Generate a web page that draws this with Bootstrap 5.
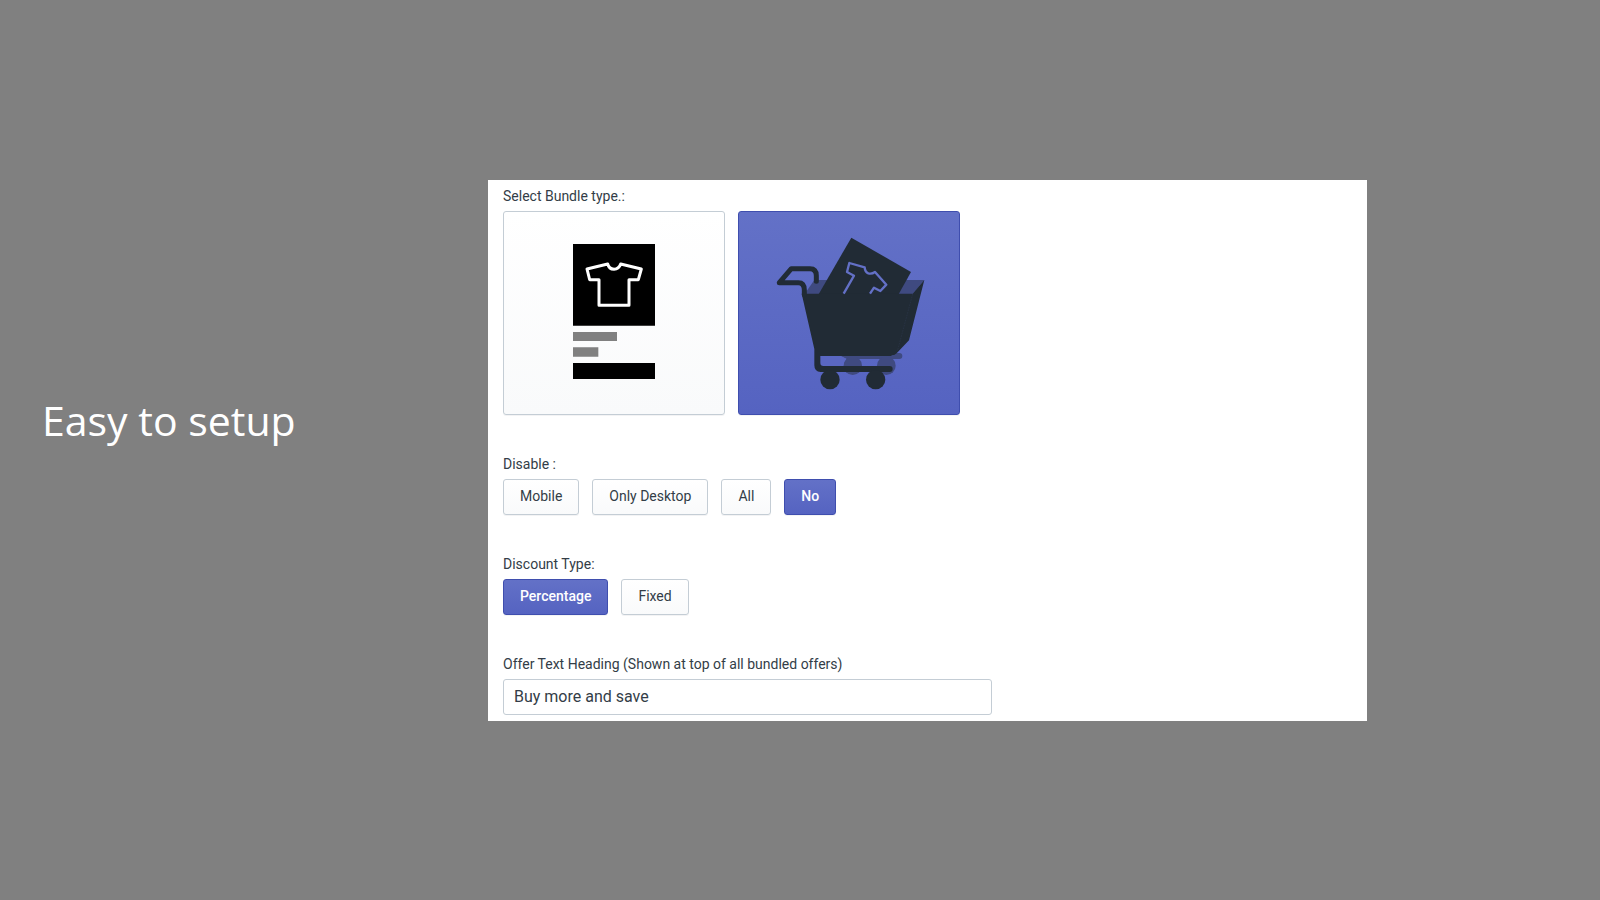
<!DOCTYPE html>
<html lang="en">
<head>
<meta charset="utf-8">
<meta name="viewport" content="width=device-width, initial-scale=1">
<title>Easy to setup</title>
<link href="https://cdn.jsdelivr.net/npm/bootstrap@5.3.0/dist/css/bootstrap.min.css" rel="stylesheet">
<style>
  body { background: #808080; color: #333d47; font-family: Roboto, "Liberation Sans", sans-serif; font-size: 14px; line-height: 20px; }
  .slide { display: grid; grid-template-columns: 446fr 879fr 233fr; padding-left: 42px; }
  .slide-title { color: #fff; font-family: "Open Sans", "Noto Sans", sans-serif; font-size: 41px; line-height: 56px; font-weight: 400; margin: 0 0 60px; }
  .setup-panel { background: #fff; padding: 6px 15px; display: grid; row-gap: 39px; }
  .field-label { display: block; margin-bottom: 5px; }
  .options { display: flex; flex-wrap: wrap; gap: 13px; }
  .choice { --bs-btn-color: #333d47; --bs-btn-border-color: #c4cdd5; --bs-btn-hover-color: #333d47; --bs-btn-hover-border-color: #c4cdd5;
    --bs-btn-font-size: 14px; --bs-btn-border-radius: 3px; padding: 5px 16px 7px;
    line-height: 22px; background: linear-gradient(#fff, #f9fafb); box-shadow: 0 1px 0 rgba(22, 29, 37, .05); }
  .choice.active { color: #fff; font-weight: 500; background: linear-gradient(#6371c7, #5563c1); border-color: #3f4eae; }
  .choice-picture { width: 222px; padding: 0; overflow: hidden; }
  .choice-picture svg { display: block; width: 100%; height: auto; }
  .offer-input { max-width: 489px; height: 36px; padding: 5px 10px; font-size: 16px; line-height: 24px; color: #333d47; border-color: #c4cdd5; border-radius: 3px; }
</style>
</head>
<body>
<main class="slide min-vh-100 align-items-center">
  <h1 class="slide-title">Easy to setup</h1>
  <form class="setup-panel">
    <div role="group" aria-labelledby="bundle-label">
      <span class="field-label" id="bundle-label">Select Bundle type.:</span>
      <div class="options">
        <button type="button" class="btn choice choice-picture" aria-label="Product bundle" aria-pressed="false">
          <svg viewBox="72 126 660 606" aria-hidden="true">
            <path d="M279 222h246v245H279zM279 579h246v48H279z" fill="#000"/>
            <path d="M279 486h132v27H279zM279 532h76v28H279z" fill="#808080"/>
            <path d="M321 297L383 282Q387 297 402 298Q417 297 422 282L484 297L475 329H447V406H357V329H329Z" fill="none" stroke="#fff" stroke-width="9" stroke-linejoin="round"/>
          </svg>
        </button>
        <button type="button" class="btn choice choice-picture active" aria-label="Cart bundle" aria-pressed="true">
          <svg viewBox="27 36 660 606" aria-hidden="true">
            <g fill="#3f4a80">
              <path d="M228 282V276L253 240H583L548 282Z"/>
              <path d="M332 467L350 477H508A9 9 0 0 0 508 459H490V467Z"/>
              <circle cx="368" cy="497" r="28"/><circle cx="469" cy="497" r="28"/>
            </g>
            <path d="M272 471H337L350 477H349Q341 485 340 498H277Q271 496 271 489Z" fill="#5a67c2"/>
            <g fill="#212b35">
              <path d="M364 113L543 216L505 284H265Z"/>
              <path d="M215 281H548L583 240L537 421L500 460Q492 468 482 468H271V489Q271 498 280 498H479A9 9 0 0 1 479 516H272Q253 515 253 496V447Z"/>
              <circle cx="300" cy="539" r="29"/><circle cx="437" cy="539" r="29"/>
            </g>
            <path d="M148 248H205Q223 248 223 270V284M148 248L184 206H240Q259 206 259 227V244" fill="none" stroke="#212b35" stroke-width="15" stroke-linecap="round" stroke-linejoin="round"/>
            <path d="M341 281L372 227L351 216L358 189L404 202Q405 216 415 220Q425 223 435 216L469 254L451 273L432 263L420 281" fill="none" stroke="#6370c6" stroke-width="7" stroke-linejoin="round"/>
            <path d="M548 282L502 454" fill="none" stroke="#2a3549" stroke-width="2" stroke-dasharray="5 3"/>
          </svg>
        </button>
      </div>
    </div>
    <div role="group" aria-labelledby="disable-label">
      <span class="field-label" id="disable-label">Disable :</span>
      <div class="options">
        <button type="button" class="btn choice">Mobile</button>
        <button type="button" class="btn choice">Only Desktop</button>
        <button type="button" class="btn choice">All</button>
        <button type="button" class="btn choice active">No</button>
      </div>
    </div>
    <div role="group" aria-labelledby="discount-label">
      <span class="field-label" id="discount-label">Discount Type:</span>
      <div class="options">
        <button type="button" class="btn choice active">Percentage</button>
        <button type="button" class="btn choice">Fixed</button>
      </div>
    </div>
    <div>
      <label class="field-label" for="offer-heading">Offer Text Heading (Shown at top of all bundled offers)</label>
      <input type="text" class="form-control offer-input" id="offer-heading" value="Buy more and save">
    </div>
  </form>
</main>
<script src="https://cdn.jsdelivr.net/npm/bootstrap@5.3.0/dist/js/bootstrap.bundle.min.js"></script>
</body>
</html>
